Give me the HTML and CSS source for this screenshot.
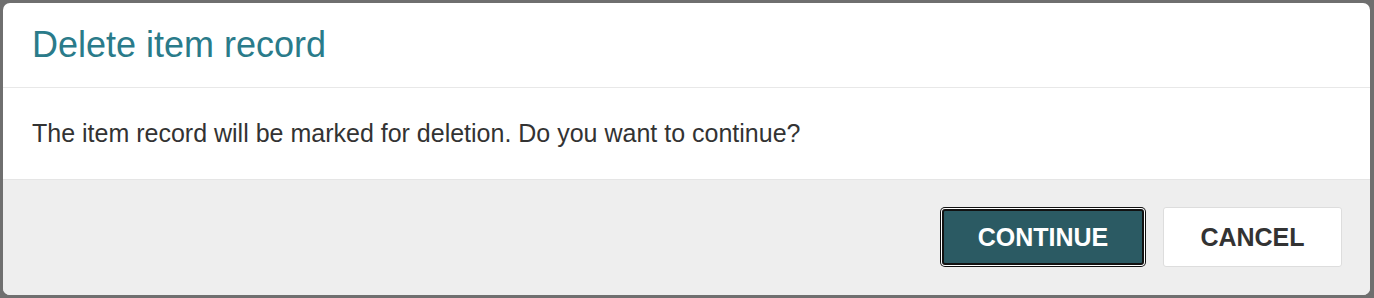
FILE: index.html
```html
<!DOCTYPE html>
<html>
<head>
  <title>Delete item record</title>
  <link rel="stylesheet" href="styles.css">
</head>
<body>
  <div class="overlay">
    <div class="modal">
      <div class="modal-header">
        <h2 class="modal-title">Delete item record</h2>
      </div>
      <div class="modal-body">
        <p>The item record will be marked for deletion. Do you want to continue?</p>
      </div>
      <div class="modal-footer">
        <button class="btn btn-primary">CONTINUE</button>
        <button class="btn btn-default">CANCEL</button>
      </div>
    </div>
  </div>
</body>
</html>
```

FILE: styles.css
```css
html, body {
  margin: 0;
  padding: 0;
  height: 100%;
}
body {
  font-family: "Liberation Sans", Arial, sans-serif;
  background-color: #6f6f6f;
}
.overlay {
  padding: 3px 4px 3px 3px;
}
.modal {
  background-color: #fff;
  border-radius: 7px;
  overflow: hidden;
  height: 292px;
  display: flex;
  flex-direction: column;
}
.modal-header {
  height: 84px;
  padding: 0 29px;
  display: flex;
  align-items: center;
  border-bottom: 1px solid #e8e8e8;
}
.modal-title {
  margin: 0;
  font-size: 36px;
  font-weight: normal;
  color: #2a7b8a;
}
.modal-body {
  height: 91px;
  padding: 0 29px;
  display: flex;
  align-items: center;
}
.modal-body p {
  margin: 0;
  font-size: 25px;
  color: #333;
}
.modal-footer {
  flex: 1;
  background-color: #eeeeee;
  border-top: 1px solid #e5e5e5;
  display: flex;
  justify-content: flex-end;
  align-items: center;
  gap: 19px;
  padding: 0 28px 1px;
}
.btn {
  font-family: "Liberation Sans", Arial, sans-serif;
  font-size: 25px;
  font-weight: bold;
  border-radius: 3px;
  cursor: pointer;
}
.btn-primary {
  width: 202px;
  height: 56px;
  color: #fff;
  background-color: #2b5a63;
  border: 2px solid #111;
  box-shadow: 0 0 0 1px #fff, 0 0 0 2px #111;
}
.btn-default {
  width: 179px;
  height: 60px;
  color: #333;
  background-color: #fff;
  border: 1px solid #ddd;
}
```
